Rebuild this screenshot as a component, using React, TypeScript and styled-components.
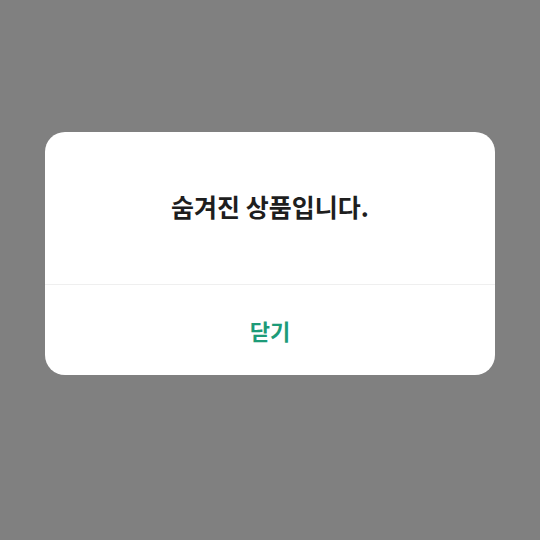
import React from 'react'
import styled, { createGlobalStyle } from 'styled-components'

const GlobalStyle = createGlobalStyle`
  html, body {
    margin: 0;
    padding: 0;
    background: #808080;
    font-family: 'Noto Sans CJK KR', 'Noto Sans', sans-serif;
  }
`

const Backdrop = styled.div`
  width: 540px;
  height: 540px;
  display: flex;
  justify-content: center;
  align-items: flex-start;
  padding-top: 132px;
  box-sizing: border-box;
  background: #808080;
`

const Dialog = styled.div`
  width: 450px;
  background: #fff;
  border-radius: 20px;
  overflow: hidden;
  display: flex;
  flex-direction: column;
`

const Body = styled.div`
  height: 153px;
  display: flex;
  align-items: center;
  justify-content: center;
  padding-bottom: 4px;
  border-bottom: 1px solid #efefef;
  box-sizing: border-box;
`

const Message = styled.p`
  margin: 0;
  font-size: 25px;
  line-height: 1.2;
  font-weight: 700;
  color: #1e1e1e;
  letter-spacing: 0;
`

const CloseButton = styled.button`
  height: 90px;
  border: none;
  background: transparent;
  font-family: inherit;
  font-size: 22px;
  font-weight: 700;
  color: #1d9b78;
  cursor: pointer;
  padding: 0;
`

const App: React.FC = () => (
  <>
    <GlobalStyle />
    <Backdrop>
      <Dialog>
        <Body>
          <Message>숨겨진 상품입니다.</Message>
        </Body>
        <CloseButton>닫기</CloseButton>
      </Dialog>
    </Backdrop>
  </>
)

export default App
